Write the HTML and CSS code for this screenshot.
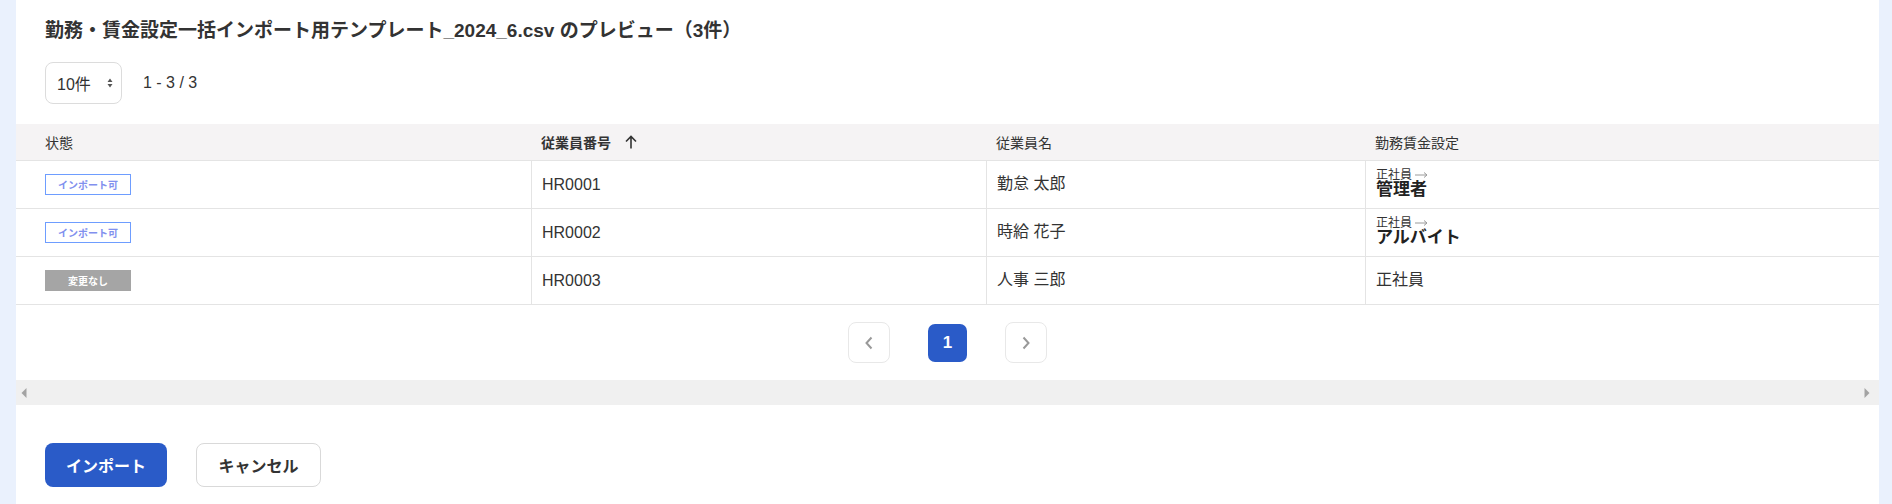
FILE: index.html
```html
<!DOCTYPE html>
<html lang="ja">
<head>
<meta charset="utf-8">
<title>プレビュー</title>
<link rel="stylesheet" href="styles.css">
</head>
<body>
<div class="page">
  <main class="panel">
    <h1 class="title">勤務・賃金設定一括インポート用テンプレート_2024_6.csv のプレビュー（3件）</h1>
    <div class="toolbar">
      <div class="select">
        <span>10件</span>
        <svg class="sel-arrows" width="6" height="10" viewBox="0 0 6 10"><path d="M3 0.5 L5.5 4 H0.5 Z M3 9.5 L5.5 6 H0.5 Z" fill="#555"/></svg>
      </div>
      <span class="range">1 - 3 / 3</span>
    </div>

    <div class="table">
      <div class="thead">
        <div class="th first">状態</div>
        <div class="th bold">従業員番号
          <svg class="sort" width="12" height="14" viewBox="0 0 12 14"><path d="M6 13.5 V1.5 M1 6.5 L6 1.5 L11 6.5" fill="none" stroke="#333" stroke-width="1.6"/></svg>
        </div>
        <div class="th">従業員名</div>
        <div class="th">勤務賃金設定</div>
      </div>
      <div class="trow">
        <div class="td first"><span class="badge ok">インポート可</span></div>
        <div class="td">HR0001</div>
        <div class="td jp">勤怠 太郎</div>
        <div class="td"><div class="change"><span class="from">正社員<svg class="arrow" width="13" height="6" viewBox="0 0 13 6"><path d="M0 3 H12 M9 0.5 L12 3 L9 5.5" fill="none" stroke="#9a9a9a" stroke-width="1"/></svg></span><span class="to">管理者</span></div></div>
      </div>
      <div class="trow">
        <div class="td first"><span class="badge ok">インポート可</span></div>
        <div class="td">HR0002</div>
        <div class="td jp">時給 花子</div>
        <div class="td"><div class="change"><span class="from">正社員<svg class="arrow" width="13" height="6" viewBox="0 0 13 6"><path d="M0 3 H12 M9 0.5 L12 3 L9 5.5" fill="none" stroke="#9a9a9a" stroke-width="1"/></svg></span><span class="to">アルバイト</span></div></div>
      </div>
      <div class="trow">
        <div class="td first"><span class="badge none">変更なし</span></div>
        <div class="td">HR0003</div>
        <div class="td jp">人事 三郎</div>
        <div class="td jp">正社員</div>
      </div>
    </div>

    <nav class="pager">
      <button class="pbtn" aria-label="前へ"><svg width="10" height="14" viewBox="0 0 10 14"><path d="M7.5 1.5 L2.5 7 L7.5 12.5" fill="none" stroke="#999" stroke-width="2"/></svg></button>
      <button class="pnum">1</button>
      <button class="pbtn" aria-label="次へ"><svg width="10" height="14" viewBox="0 0 10 14"><path d="M2.5 1.5 L7.5 7 L2.5 12.5" fill="none" stroke="#999" stroke-width="2"/></svg></button>
    </nav>

    <div class="hscroll">
      <svg width="6" height="10" viewBox="0 0 6 10"><path d="M5.5 0 V10 L0.5 5 Z" fill="#a3a3a3"/></svg>
      <svg width="6" height="10" viewBox="0 0 6 10"><path d="M0.5 0 V10 L5.5 5 Z" fill="#a3a3a3"/></svg>
    </div>

    <div class="actions">
      <button class="btn primary">インポート</button>
      <button class="btn secondary">キャンセル</button>
    </div>
  </main>
</div>
</body>
</html>
```

FILE: styles.css
```css
* { box-sizing: border-box; }
html, body { margin: 0; padding: 0; }
body {
  background: #eaf1fd;
  font-family: "Liberation Sans", "Noto Sans CJK JP", sans-serif;
  color: #333;
}
.page {
  padding: 0 13px 0 16px;
  height: 504px;
  overflow: hidden;
}
.panel {
  background: #fff;
  height: 504px;
  padding-top: 18px;
}
.title {
  margin: 0;
  padding-left: 29px;
  font-size: 19px;
  line-height: 26px;
  font-weight: 700;
  color: #333;
}
.toolbar {
  display: flex;
  align-items: center;
  margin-top: 18px;
  padding-left: 29px;
  height: 42px;
}
.select {
  width: 77px;
  height: 42px;
  border: 1px solid #dcdcdc;
  border-radius: 8px;
  display: flex;
  align-items: center;
  justify-content: space-between;
  padding: 0 8px 0 11px;
  font-size: 16px;
}
.range {
  margin-left: 21px;
  font-size: 16px;
}
.table {
  margin-top: 20px;
}
.thead, .trow {
  display: grid;
  grid-template-columns: 515px 455px 379px 1fr;
  border-bottom: 1px solid #e4e4e4;
}
.thead {
  height: 37px;
  background: #f5f3f4;
}
.trow { height: 48px; }
.th, .td {
  display: flex;
  align-items: center;
  padding: 0 10px;
}
.th { font-size: 14px; }
.th.bold { font-weight: 700; }
.sort { margin-left: 14px; }
.td { font-size: 16px; }
.td.jp { padding-bottom: 6px; }
.td + .td { border-left: 1px solid #e4e4e4; }
.first { padding-left: 29px; }
.badge {
  display: inline-flex;
  align-items: center;
  justify-content: center;
  width: 86px;
  height: 21px;
  font-size: 10px;
  font-weight: 700;
}
.badge.ok {
  border: 1.5px solid #6e9dff;
  color: #8190ee;
}
.badge.none {
  background: #a5a5a5;
  color: #fff;
}
.change {
  display: flex;
  flex-direction: column;
  margin-top: -2px;
}
.from {
  display: flex;
  align-items: center;
  font-size: 12px;
  line-height: 11px;
  color: #333;
}
.arrow {
  margin-left: 3px;
  margin-top: -1px;
}
.to {
  font-size: 17px;
  line-height: 17px;
  font-weight: 700;
  color: #222;
}
.pager {
  display: flex;
  justify-content: center;
  align-items: center;
  gap: 38px;
  margin-top: 17px;
  height: 41px;
}
.pbtn {
  width: 42px;
  height: 41px;
  border: 1px solid #e8e8e8;
  border-radius: 8px;
  background: #fff;
  display: flex;
  align-items: center;
  justify-content: center;
  padding: 0;
}
.pnum {
  width: 39px;
  height: 38px;
  border: none;
  border-radius: 7px;
  background: #2a5bc8;
  color: #fff;
  font-family: "Liberation Sans", sans-serif;
  font-size: 17px;
  font-weight: 700;
  padding: 0;
}
.hscroll {
  margin-top: 17px;
  height: 25px;
  background: #f0f0f0;
  display: flex;
  align-items: center;
  justify-content: space-between;
  padding: 0 9px 0 5px;
}
.actions {
  display: flex;
  gap: 29px;
  margin-top: 38px;
  padding-left: 29px;
}
.btn {
  height: 44px;
  border-radius: 8px;
  font-family: "Noto Sans CJK JP", sans-serif;
  font-size: 16px;
  font-weight: 700;
  padding: 0;
}
.btn.primary {
  width: 122px;
  background: #2a5bc8;
  color: #fff;
  border: none;
}
.btn.secondary {
  width: 125px;
  background: #fff;
  color: #333;
  border: 1px solid #d9d9d9;
}
```
